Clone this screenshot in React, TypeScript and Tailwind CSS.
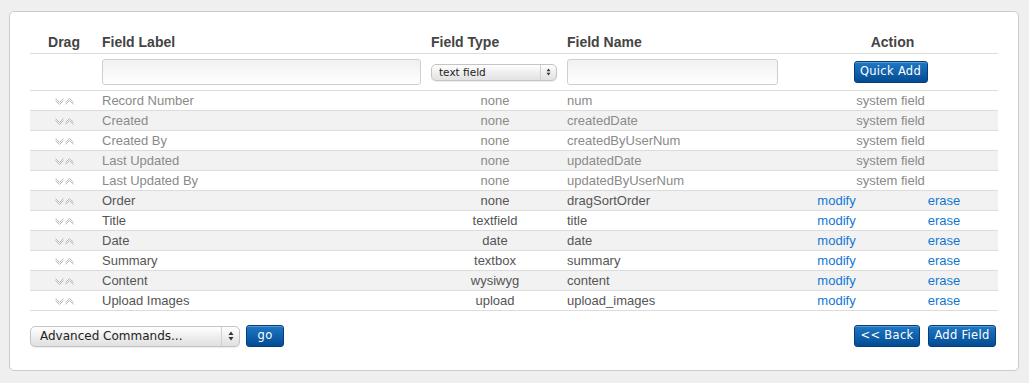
import React from "react";

type Row = {
  label: string;
  type: string;
  name: string;
  system?: boolean;
};

const rows: Row[] = [
  { label: "Record Number", type: "none", name: "num", system: true },
  { label: "Created", type: "none", name: "createdDate", system: true },
  { label: "Created By", type: "none", name: "createdByUserNum", system: true },
  { label: "Last Updated", type: "none", name: "updatedDate", system: true },
  { label: "Last Updated By", type: "none", name: "updatedByUserNum", system: true },
  { label: "Order", type: "none", name: "dragSortOrder" },
  { label: "Title", type: "textfield", name: "title" },
  { label: "Date", type: "date", name: "date" },
  { label: "Summary", type: "textbox", name: "summary" },
  { label: "Content", type: "wysiwyg", name: "content" },
  { label: "Upload Images", type: "upload", name: "upload_images" },
];

const grid = "grid grid-cols-[68px_329px_136px_220px_107px_108px] items-center";

function DragArrows() {
  return (
    <svg width="20" height="8" viewBox="0 0 20 8" className="block">
      <g fill="none" stroke="#b8b8b8" strokeWidth="1">
        <polyline points="0.5,1.5 4.5,5.5 8.5,1.5" />
        <polyline points="0.5,3.5 4.5,7.5 8.5,3.5" />
        <polyline points="10.5,5.5 14.5,1.5 18.5,5.5" />
        <polyline points="10.5,7.5 14.5,3.5 18.5,7.5" />
      </g>
    </svg>
  );
}

function BlueButton({ children, className = "" }: { children: React.ReactNode; className?: string }) {
  return (
    <button
      className={`h-[22px] rounded-[3px] border border-[#043f7c] bg-gradient-to-b from-[#1f78c4] to-[#034c94] text-[11.5px] font-normal tracking-[0.3px] text-white shadow-[inset_0_1px_0_rgba(255,255,255,0.25)] font-['DejaVu_Sans',sans-serif] ${className}`}
    >
      {children}
    </button>
  );
}

function SelectArrows() {
  return (
    <svg width="6" height="10" viewBox="0 0 6 10">
      <polygon points="3,0.5 5.5,4 0.5,4" fill="#333" />
      <polygon points="3,9.5 5.5,6 0.5,6" fill="#333" />
    </svg>
  );
}

export default function App() {
  return (
    <div className="min-h-[383px] w-[1029px] bg-[#efefef] pt-[11px] pl-[9px] font-['Liberation_Sans',Arial,sans-serif]">
      <div className="w-[1010px] rounded-[5px] border border-[#cbcbcb] bg-white px-5 pt-[20px] pb-[23px]">
        {/* Header */}
        <div className={`${grid} h-[22px] border-b border-[#dcdcdc] text-[14px] font-bold text-[#444]`}>
          <div className="text-center">Drag</div>
          <div className="pl-1">Field Label</div>
          <div className="pl-1">Field Type</div>
          <div className="pl-1">Field Name</div>
          <div className="col-span-2 pl-1 text-center">Action</div>
        </div>

        {/* Quick add row */}
        <div className={`${grid} h-[37px] border-b border-[#dcdcdc]`}>
          <div />
          <div className="pl-1">
            <div className="h-[26px] w-[319px] rounded-[3px] border border-[#cfcfcf] bg-gradient-to-b from-[#f1f1f1] to-white" />
          </div>
          <div className="pl-1">
            <div className="flex h-[17px] w-[126px] items-center rounded-[5px] border border-[#c4c4c4] bg-gradient-to-b from-white via-[#efefef] to-[#e2e2e2] shadow-[0_1px_1px_rgba(0,0,0,0.08)]">
              <span className="flex-1 pl-[7px] text-[10.5px] leading-none text-[#222] font-['DejaVu_Sans',sans-serif]">text field</span>
              <span className="flex h-full w-[16px] items-center justify-center border-l border-[#d0d0d0]">
                <svg width="5" height="8" viewBox="0 0 5 8">
                  <polygon points="2.5,0.5 4.5,3.2 0.5,3.2" fill="#333" />
                  <polygon points="2.5,7.5 4.5,4.8 0.5,4.8" fill="#333" />
                </svg>
              </span>
            </div>
          </div>
          <div className="pl-1">
            <div className="h-[26px] w-[211px] rounded-[3px] border border-[#cfcfcf] bg-gradient-to-b from-[#f1f1f1] to-white" />
          </div>
          <div className="col-span-2 flex justify-center">
            <BlueButton className="w-[74px]">Quick Add</BlueButton>
          </div>
        </div>

        {/* Field rows */}
        {rows.map((r, i) => (
          <div
            key={r.name}
            className={`${grid} h-[20px] border-b border-[#dcdcdc] text-[13px] leading-none ${
              i % 2 === 1 ? "bg-[#f2f2f2]" : "bg-white"
            } ${r.system ? "text-[#8a8a8a]" : "text-[#555]"}`}
          >
            <div className="flex justify-center pl-[2px]">
              <DragArrows />
            </div>
            <div className="pl-1">{r.label}</div>
            <div className="text-center">{r.type}</div>
            <div className="pl-1">{r.name}</div>
            {r.system ? (
              <div className="col-span-2 text-center">system field</div>
            ) : (
              <>
                <div className="text-center text-[#1176d2]">modify</div>
                <div className="text-center text-[#1176d2]">erase</div>
              </>
            )}
          </div>
        ))}

        {/* Footer */}
        <div className="mt-[14px] flex h-[22px] items-center justify-between">
          <div className="flex items-center gap-[6px]">
            <div className="flex h-[21px] w-[210px] items-center rounded-[5px] border border-[#c4c4c4] bg-gradient-to-b from-white via-[#efefef] to-[#e0e0e0] shadow-[0_1px_1px_rgba(0,0,0,0.08)]">
              <span className="flex-1 pl-[9px] text-[12px] leading-none text-[#222] font-['DejaVu_Sans',sans-serif]">
                Advanced Commands...
              </span>
              <span className="flex h-full w-[18px] items-center justify-center border-l border-[#d0d0d0]">
                <SelectArrows />
              </span>
            </div>
            <BlueButton className="w-[38px]">go</BlueButton>
          </div>
          <div className="flex items-center gap-[8px] pr-[2px]">
            <BlueButton className="w-[66px]">&lt;&lt; Back</BlueButton>
            <BlueButton className="w-[68px]">Add Field</BlueButton>
          </div>
        </div>
      </div>
    </div>
  );
}
